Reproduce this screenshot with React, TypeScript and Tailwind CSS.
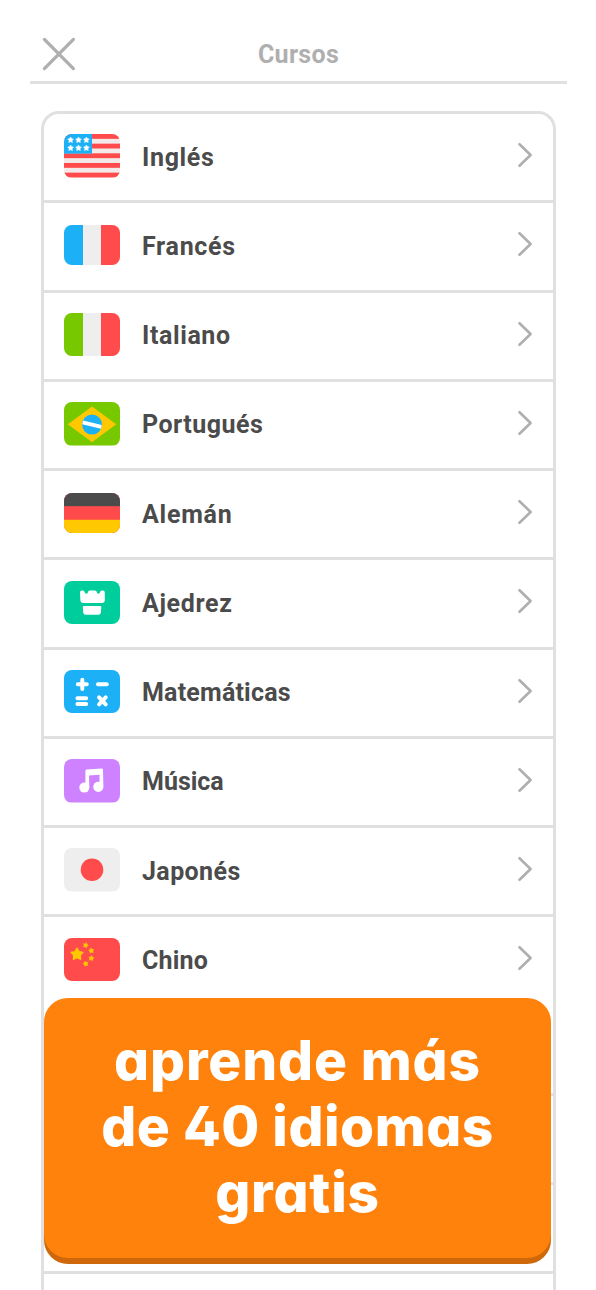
import { ReactNode } from "react";

interface Course {
  name: string;
  icon: ReactNode;
  label: string;
}

interface TileProps {
  color: string;
  height?: number;
  children?: ReactNode;
}

// Rounded tile that every course icon is drawn on
function Tile({ color, height = 43.5, children }: TileProps) {
  return (
    <svg
      width="56"
      height={height}
      viewBox={`0 0 56 ${height}`}
      className="block overflow-hidden rounded-[8px]"
    >
      <rect width="56" height={height} fill={color} />
      {children}
    </svg>
  );
}

interface StarProps {
  x: number;
  y: number;
  r: number;
  fill: string;
  turn?: number;
}

function Star({ x, y, r, fill, turn = 0 }: StarProps) {
  const points = Array.from({ length: 10 }).map((_, i) => {
    const radius = i % 2 === 0 ? r : r * 0.55;
    const angle = (Math.PI / 5) * i - Math.PI / 2;
    return `${radius * Math.cos(angle)},${radius * Math.sin(angle)}`;
  });
  return (
    <polygon
      points={points.join(" ")}
      transform={`translate(${x} ${y}) rotate(${turn})`}
      fill={fill}
      stroke={fill}
      strokeWidth={r * 0.2}
      strokeLinejoin="round"
    />
  );
}

function UsaFlag() {
  return (
    <Tile color="#f3e9e9">
      {[0, 2, 4, 6, 8].map((i) => (
        <rect key={i} y={i * 4.83} width="56" height="4.83" fill="#ff4b4b" />
      ))}
      <rect width="28" height="19.6" fill="#1cb0f6" />
      {[6, 14].map((y) =>
        [6.6, 14.5, 22.4].map((x) => <Star key={`${x}-${y}`} x={x} y={y} r={3} fill="#fff" />)
      )}
    </Tile>
  );
}

function StripeFlag({ left, height }: { left: string; height?: number }) {
  return (
    <Tile color="#eeeeee" height={height}>
      <rect width="19" height="44" fill={left} />
      <rect x="37" width="19" height="44" fill="#ff4b4b" />
    </Tile>
  );
}

function BrazilFlag() {
  return (
    <Tile color="#78c800">
      <path d="M28 5 51.5 22.3 28 39.6 4.5 22.3Z" fill="#ffc800" stroke="#ffc800" strokeLinejoin="round" />
      <circle cx="28" cy="22.6" r="10" fill="#1cb0f6" />
      <path d="M18.6 20.4 37.4 24.8" stroke="#fff" strokeWidth="3.8" />
    </Tile>
  );
}

function GermanyFlag() {
  return (
    <Tile color="#ff4b4b" height={40}>
      <rect width="56" height="13.2" fill="#4b4b4b" />
      <rect y="26.8" width="56" height="13.2" fill="#ffc800" />
    </Tile>
  );
}

function ChessIcon() {
  return (
    <Tile color="#00cd9c">
      <path
        d="M16 11.4Q16 9.4 18 9.4H18.8Q20.4 9.4 20.6 11Q21 12.8 22.4 12.8Q23.8 12.8 24 11Q24.2 9.4 25.8 9.4H31Q32.6 9.4 32.8 11Q33 12.8 34.3 12.8Q35.8 12.8 36.1 11Q36.3 9.4 37.9 9.4H38.8Q40.8 9.4 40.8 11.4V19.6Q40.8 22 38.4 22H18.9Q16.5 22 16.4 19.6Z"
        fill="#fff"
      />
      <path
        d="M19.8 25H36.3Q37.4 25 37.3 26.1L36.9 31.5Q36.6 33.7 34.4 33.7H21.7Q19.5 33.7 19.2 31.5L18.8 26.1Q18.7 25 19.8 25Z"
        fill="#fff"
      />
    </Tile>
  );
}

function MathIcon() {
  return (
    <Tile color="#1cb0f6">
      <g stroke="#fff" strokeWidth="4" strokeLinecap="round">
        <path d="M13.8 14.2H22.8M18.3 9.7V18.9" />
        <path d="M34 14.2H42.8" />
        <path d="M13.4 28.3H22.2M13.4 33.9H22.2" />
        <path d="M35.1 27.3 41.7 34.3M41.7 27.3 35.1 34.3" />
      </g>
    </Tile>
  );
}

function MusicIcon() {
  return (
    <Tile color="#ce82ff">
      <circle cx="20.3" cy="28.6" r="5" fill="#fff" />
      <circle cx="34.3" cy="27.8" r="5.1" fill="#fff" />
      <path
        d="M21.4 28.6V11.9Q21.4 10.7 22.6 10.6L37.7 9.6Q39 9.5 39 10.8L39.4 27.8H35.5V15.8L25 16.5L25.3 28.6Z"
        fill="#fff"
      />
    </Tile>
  );
}

function JapanFlag() {
  return (
    <Tile color="#eeeeee">
      <circle cx="28" cy="21.7" r="11.3" fill="#ff4b4b" />
    </Tile>
  );
}

function ChinaFlag() {
  return (
    <Tile color="#ff4b4b">
      <Star x={13} y={16.3} r={6.3} fill="#ffc800" />
      <Star x={21.7} y={7.3} r={2.7} fill="#ffc800" turn={20} />
      <Star x={27.3} y={12.7} r={2.7} fill="#ffc800" turn={-10} />
      <Star x={27.3} y={20.3} r={2.7} fill="#ffc800" turn={10} />
      <Star x={21.7} y={25.7} r={2.7} fill="#ffc800" turn={-15} />
    </Tile>
  );
}

const courses: Course[] = [
  { name: "Inglés", icon: <UsaFlag />, label: "tracking-[0.65px]" },
  { name: "Francés", icon: <StripeFlag left="#1cb0f6" height={40} />, label: "tracking-[0.7px]" },
  { name: "Italiano", icon: <StripeFlag left="#78c800" />, label: "tracking-[0.6px]" },
  { name: "Portugués", icon: <BrazilFlag />, label: "tracking-[0.5px]" },
  { name: "Alemán", icon: <GermanyFlag />, label: "tracking-[0.75px]" },
  { name: "Ajedrez", icon: <ChessIcon />, label: "tracking-[0.65px]" },
  { name: "Matemáticas", icon: <MathIcon />, label: "tracking-[0.2px]" },
  { name: "Música", icon: <MusicIcon />, label: "tracking-[0px]" },
  { name: "Japonés", icon: <JapanFlag />, label: "tracking-[0.4px]" },
  { name: "Chino", icon: <ChinaFlag />, label: "tracking-[0.2px]" },
];

function CourseRow({ course }: { course: Course }) {
  return (
    <li className="flex h-[89.25px] items-center border-b-3 border-[#e0e0e0] px-[20px] last:border-transparent">
      <div className="-mt-[2px] w-14">{course.icon}</div>
      <span className={`ml-[22px] flex-1 text-[25px] leading-none font-bold text-[#4b4b4b] ${course.label}`}>
        {course.name}
      </span>
      <svg width="16" height="26" viewBox="0 0 16 26" fill="none" className="-mt-[4px]">
        <path
          d="M2.5 2.2 13.6 13 2.5 23.8"
          stroke="#afafaf"
          strokeWidth="2.6"
          strokeLinecap="round"
          strokeLinejoin="round"
        />
      </svg>
    </li>
  );
}

export default function App() {
  return (
    <div className="relative h-[1290px] w-[596px] overflow-hidden bg-white font-[Roboto,sans-serif]">
      {/* Header */}
      <header className="mx-[30px] grid h-[84px] w-[537px] grid-cols-[1fr_auto_1fr] items-center border-b-3 border-[#e0e0e0] pt-[27px]">
        <svg width="34" height="34" viewBox="0 0 34 34" className="ml-[12px]">
          <path d="M2.4 2.4 31.4 31.6M31.4 2.4 2.4 31.6" stroke="#afafaf" strokeWidth="3.3" strokeLinecap="round" />
        </svg>
        <h1 className="text-[25px] leading-none font-bold tracking-[0.3px] text-[#afafaf]">Cursos</h1>
      </header>

      {/* Course list, continues under the banner */}
      <div className="mt-[27px] ml-[41px] w-[515px] rounded-t-[18px] border-3 border-b-0 border-[#e0e0e0]">
        <ul>
          {courses.map((course) => (
            <CourseRow key={course.name} course={course} />
          ))}
        </ul>
        {[0, 1, 2, 3].map((i) => (
          <div key={i} className="h-[89.25px] border-b-3 border-[#e0e0e0]" />
        ))}
      </div>

      {/* Banner */}
      <div className="absolute top-[998px] left-[44px] flex h-[260px] w-[507px] flex-col items-center rounded-[24px] bg-[#ff820c] pt-[29px] text-center font-[Inter,sans-serif] text-[55px] leading-[66px] font-extrabold text-white shadow-[0_6px_0_#cf680a] [font-feature-settings:'cv11'_1,'ss01'_1]">
        <span className="tracking-[0.85px]">aprende más</span>
        <span className="tracking-[0.5px]">de 40 idiomas</span>
        <span className="tracking-[0.8px]">gratis</span>
      </div>
    </div>
  );
}
